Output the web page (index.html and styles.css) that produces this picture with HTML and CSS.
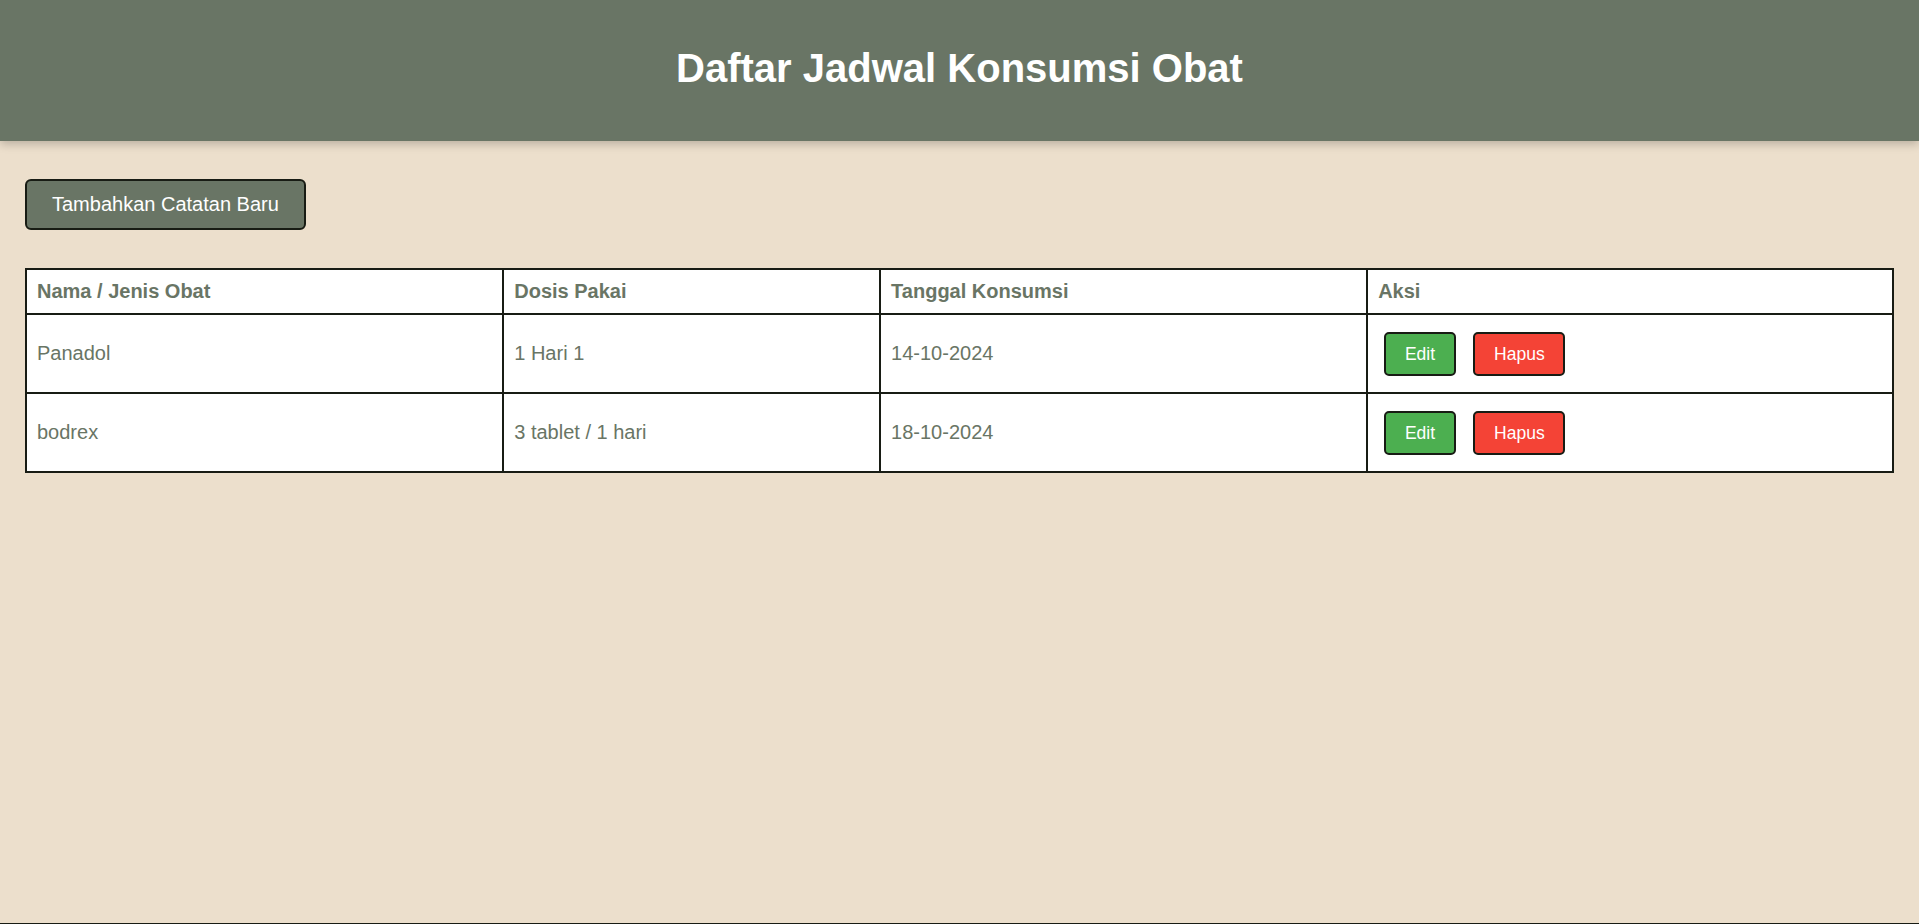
FILE: index.html
```html
<!DOCTYPE html>
<html lang="id">
<head>
<meta charset="utf-8">
<title>Daftar Jadwal Konsumsi Obat</title>
<link rel="stylesheet" href="styles.css">
</head>
<body>
<div class="page">
  <header class="site-header">
    <h1 class="title">Daftar Jadwal Konsumsi Obat</h1>
  </header>
  <main class="content">
    <div class="toolbar">
      <button class="btn btn-primary" type="button">Tambahkan Catatan Baru</button>
    </div>
    <table class="schedule">
      <thead>
        <tr>
          <th>Nama / Jenis Obat</th>
          <th>Dosis Pakai</th>
          <th>Tanggal Konsumsi</th>
          <th>Aksi</th>
        </tr>
      </thead>
      <tbody>
        <tr>
          <td>Panadol</td>
          <td>1 Hari 1</td>
          <td>14-10-2024</td>
          <td><button class="btn-small btn-edit" type="button">Edit</button> <button class="btn-small btn-delete" type="button">Hapus</button></td>
        </tr>
        <tr>
          <td>bodrex</td>
          <td>3 tablet / 1 hari</td>
          <td>18-10-2024</td>
          <td><button class="btn-small btn-edit" type="button">Edit</button> <button class="btn-small btn-delete" type="button">Hapus</button></td>
        </tr>
      </tbody>
    </table>
  </main>
  <footer class="site-footer"></footer>
</div>
</body>
</html>
```

FILE: styles.css
```css
html, body {
  margin: 0;
  padding: 0;
}

body {
  background: #ECDFCC;
  font-family: "Liberation Sans", Arial, sans-serif;
  font-size: 20px;
  color: #697565;
}

.page {
  display: flex;
  flex-direction: column;
  min-height: 100vh;
}

.site-header {
  background: #697565;
  height: 141px;
  box-sizing: border-box;
  padding-top: 45px;
  box-shadow: 0 3px 9px rgba(0, 0, 0, 0.22);
  position: relative;
  z-index: 1;
}

.title {
  margin: 0;
  text-align: center;
  color: #ffffff;
  font-size: 40px;
  font-weight: bold;
  line-height: 46px;
}

.content {
  flex: 1;
  padding: 38px 25px 0;
}

.toolbar {
  margin-bottom: 38px;
  height: 51px;
}

.btn {
  font-family: "Liberation Sans", Arial, sans-serif;
  font-size: 20px;
  line-height: 23px;
  padding: 12px 25px;
  border: 2px solid #181C14;
  border-radius: 6px;
  cursor: pointer;
}

.btn-primary {
  background: #697565;
  color: #ffffff;
}

.schedule {
  width: 100%;
  border-collapse: collapse;
  background: #ffffff;
}

.schedule th,
.schedule td {
  border: 2px solid #181C14;
  padding: 10px;
  text-align: left;
  line-height: 23px;
  color: #697565;
}

.schedule th {
  font-weight: bold;
}

.btn-small {
  font-family: "Liberation Sans", Arial, sans-serif;
  font-size: 17.5px;
  line-height: 20px;
  padding: 10px 18.75px;
  margin: 6.5px 6px;
  border: 2px solid #181C14;
  border-radius: 5px;
  color: #ffffff;
  cursor: pointer;
  vertical-align: middle;
}

.btn-edit {
  background: #4CAF50;
}

.btn-delete {
  background: #F44336;
}

.site-footer {
  border-top: 1px solid #181C14;
}
```
